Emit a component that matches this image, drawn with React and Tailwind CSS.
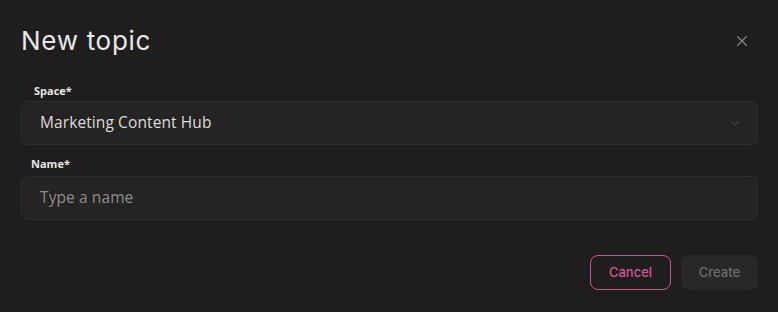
import { X, ChevronDown } from "lucide-react";

/* Étiquette de champ */
function FieldLabel({ children, className = "" }) {
  return (
    <p className={`text-[11px] font-bold text-[#e6e6e6] leading-none ${className}`}>
      {children}
    </p>
  );
}

export default function App() {
  return (
    <div
      className="h-[312px] w-[778px] bg-[#201d1e] pl-[21px] pr-[20px] pt-[25px]"
      style={{ fontFamily: "'Open Sans', 'Noto Sans', sans-serif" }}
    >
      {/* En-tête */}
      <div className="flex items-center justify-between">
        <h1
          className="text-[26px] leading-[32px] text-[#e9e7e8] tracking-[0.7px]"
          style={{ fontFamily: "Inter, 'Noto Sans', sans-serif" }}
        >
          New topic
        </h1>
        <X className="mr-[7px] h-[18px] w-[18px] text-[#8a8788]" strokeWidth={1.5} />
      </div>

      {/* Champ espace */}
      <FieldLabel className="mt-[28px] ml-[13px]">Space*</FieldLabel>
      <div className="mt-[5px] flex h-[44px] items-center justify-between rounded-[7px] border border-[#2f2c2d] bg-[#262324] pl-[18px] pr-[15px]">
        <span className="text-[15.5px] text-[#dcdcdc] tracking-[0.1px]">Marketing Content Hub</span>
        <ChevronDown className="h-[14px] w-[14px] text-[#5f5c5d]" strokeWidth={1.5} />
      </div>

      {/* Champ nom */}
      <FieldLabel className="mt-[13px] ml-[10px]">Name*</FieldLabel>
      <div className="mt-[7px] flex h-[44px] items-center rounded-[7px] border border-[#2f2c2d] bg-[#262324] pl-[18px]">
        <span className="text-[15.5px] text-[#8e8c8d] tracking-[0.1px]">Type a name</span>
      </div>

      {/* Actions */}
      <div className="mt-[35px] flex justify-end gap-[10px]">
        <button
          className="h-[35px] w-[81px] rounded-[8px] border border-[#c8578f] text-[13px] font-medium text-[#cf5a95]"
          style={{ fontFamily: "Inter, sans-serif" }}
        >
          Cancel
        </button>
        <button
          className="h-[35px] w-[77px] rounded-[8px] bg-[#2a2728] text-[13px] font-medium text-[#6e6b6c]"
          style={{ fontFamily: "Inter, sans-serif" }}
        >
          Create
        </button>
      </div>
    </div>
  );
}
